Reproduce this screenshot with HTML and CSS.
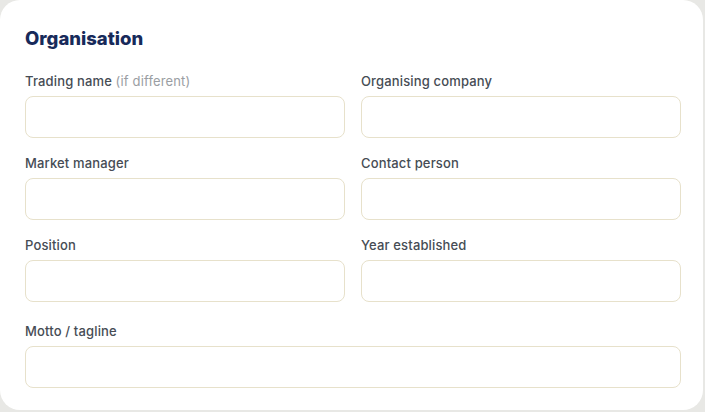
FILE: index.html
```html
<!DOCTYPE html>
<html>
<head>
<meta charset="utf-8">
<link rel="stylesheet" href="styles.css">
</head>
<body>
<div class="card">
  <h2 class="title">Organisation</h2>
  <div class="grid">
    <div class="field">
      <label class="label">Trading name <span class="hint">(if different)</span></label>
      <div class="input"></div>
    </div>
    <div class="field">
      <label class="label">Organising company</label>
      <div class="input"></div>
    </div>
    <div class="field">
      <label class="label">Market manager</label>
      <div class="input"></div>
    </div>
    <div class="field">
      <label class="label">Contact person</label>
      <div class="input"></div>
    </div>
    <div class="field">
      <label class="label">Position</label>
      <div class="input"></div>
    </div>
    <div class="field">
      <label class="label">Year established</label>
      <div class="input"></div>
    </div>
    <div class="field full">
      <label class="label">Motto / tagline</label>
      <div class="input"></div>
    </div>
  </div>
</div>
</body>
</html>
```
FILE: styles.css
```css
html, body {
  margin: 0;
  padding: 0;
  background: #e8e8e5;
}
body {
  width: 705px;
  height: 412px;
  overflow: hidden;
  font-family: Inter, "Noto Sans", sans-serif;
}
.card {
  box-sizing: border-box;
  width: 703px;
  height: 410px;
  background: #ffffff;
  border-radius: 20px;
  padding: 24px 23px 0 25px;
}
.title {
  margin: 0 0 20px 0;
  font-size: 18.5px;
  line-height: 28px;
  font-weight: 800;
  color: #172a5a;
  letter-spacing: 0;
}
.grid {
  display: grid;
  grid-template-columns: 320px 320px;
  column-gap: 16px;
  row-gap: 16px;
}
.field {
  display: flex;
  flex-direction: column;
  gap: 6px;
}
.full {
  grid-column: 1 / 3;
  margin-top: 4px;
}
.label {
  font-size: 13px;
  line-height: 18px;
  font-weight: 500;
  color: #464c54;
  letter-spacing: 0.15px;
}
.hint {
  color: #9a9ea3;
  font-weight: 400;
}
.input {
  box-sizing: border-box;
  height: 42px;
  border: 1px solid #e7e1cb;
  border-radius: 8px;
  background: #ffffff;
}
```
